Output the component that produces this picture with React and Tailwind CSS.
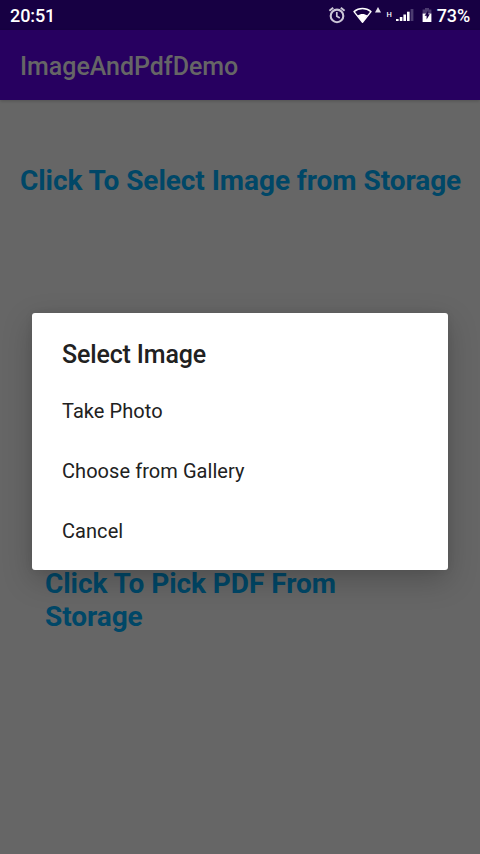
function AlarmIcon() {
  return (
    <svg className="h-[18px] w-[18px]" viewBox="0 0 18 18" fill="none" stroke="#cbc6d6">
      <circle cx="9" cy="9.9" r="6.3" strokeWidth="2.1" />
      <path d="M1.4 4.8 5.2 1.7M16.6 4.8 12.8 1.7" strokeWidth="2" />
      <path d="M8.8 6v4.3l3 1.8" strokeWidth="1.7" />
    </svg>
  );
}

function WifiIcon() {
  return (
    <svg className="h-[17px] w-[28px]" viewBox="0 0 28 17">
      <path d="M1 4.6C6 .4 13 .4 18 4.6L9.5 15.3Z" fill="none" stroke="#fff" strokeWidth="1.4" strokeLinejoin="round" />
      <path d="M4.6 8.6C7.4 6.3 11.6 6.3 14.4 8.6L9.5 15.3Z" fill="#fff" />
      <path d="M25 0 28 5.5H22Z" fill="#e4e1ea" />
    </svg>
  );
}

function SignalIcon() {
  return (
    <svg className="h-[13px] w-[18px]" viewBox="0 0 18 13" fill="#fff">
      <rect x="0" y="10" width="2.6" height="2" />
      <rect x="3.8" y="8" width="2.6" height="4" />
      <rect x="7.4" y="5.5" width="2.6" height="6.5" />
      <rect x="11" y="2.7" width="2.6" height="9.3" />
      <rect x="14.6" y="0" width="2.8" height="12" fill="#4c3b70" />
    </svg>
  );
}

function BatteryIcon() {
  return (
    <svg className="h-[15px] w-[10px]" viewBox="0 0 10 15">
      <path d="M3 0h4v1.4h2.4V6H.6V1.4H3Z" fill="#4c3b70" />
      <path d="M.6 5.6h8.8V14H.6Z" fill="#fff" />
      <path d="M6.2 2.6 2.6 7.8h2v3.8L7.8 6.2H6.2Z" fill="#180044" />
    </svg>
  );
}

export default function App() {
  return (
    <div className="relative h-[854px] w-[480px] overflow-hidden bg-[#666666] font-[Roboto,sans-serif]">
      <header className="flex h-[30px] items-center justify-between bg-[#170043] px-[10px] text-[18px] font-medium leading-[30px] text-white">
        <span className="pt-[2px] tracking-[-0.1px]">20:51</span>
        <div className="flex items-center">
          <AlarmIcon />
          <span className="ml-[7px]"><WifiIcon /></span>
          <span className="ml-[5px] text-[7.5px] font-medium">H</span>
          <span className="ml-[4px]"><SignalIcon /></span>
          <span className="ml-[8px]"><BatteryIcon /></span>
          <span className="ml-[5px] pt-[2px] tracking-[-0.15px]">73%</span>
        </div>
      </header>
      <div className="flex h-[70px] items-center bg-[#270060] px-5 pt-[3px] text-[25px] font-medium tracking-[-0.03px] text-[#666666] shadow-[0_1px_3px_rgba(0,0,0,0.2)]">
        ImageAndPdfDemo
      </div>
      <main className="text-[28px] font-bold leading-[33px] tracking-[-0.055px] text-[#004767]">
        <p className="whitespace-nowrap pl-5 pt-[64px]">Click To Select Image from Storage</p>
        <p className="ml-[45px] mt-[370px] w-[340px]">Click To Pick PDF From Storage</p>
      </main>
      <div className="absolute left-8 top-[313px] h-[257px] w-[416px] rounded-[3px] bg-white px-[30px] pt-[22px] text-[#212121] shadow-[0_10px_30px_rgba(0,0,0,0.22),0_0_8px_rgba(0,0,0,0.06)]">
        <h2 className="h-[46px] text-[25px] font-medium leading-[40px] tracking-[-0.15px]">Select Image</h2>
        <ul className="text-[20px] leading-[60px] tracking-[0.06px]">
          <li>Take Photo</li>
          <li>Choose from Gallery</li>
          <li>Cancel</li>
        </ul>
      </div>
    </div>
  );
}
